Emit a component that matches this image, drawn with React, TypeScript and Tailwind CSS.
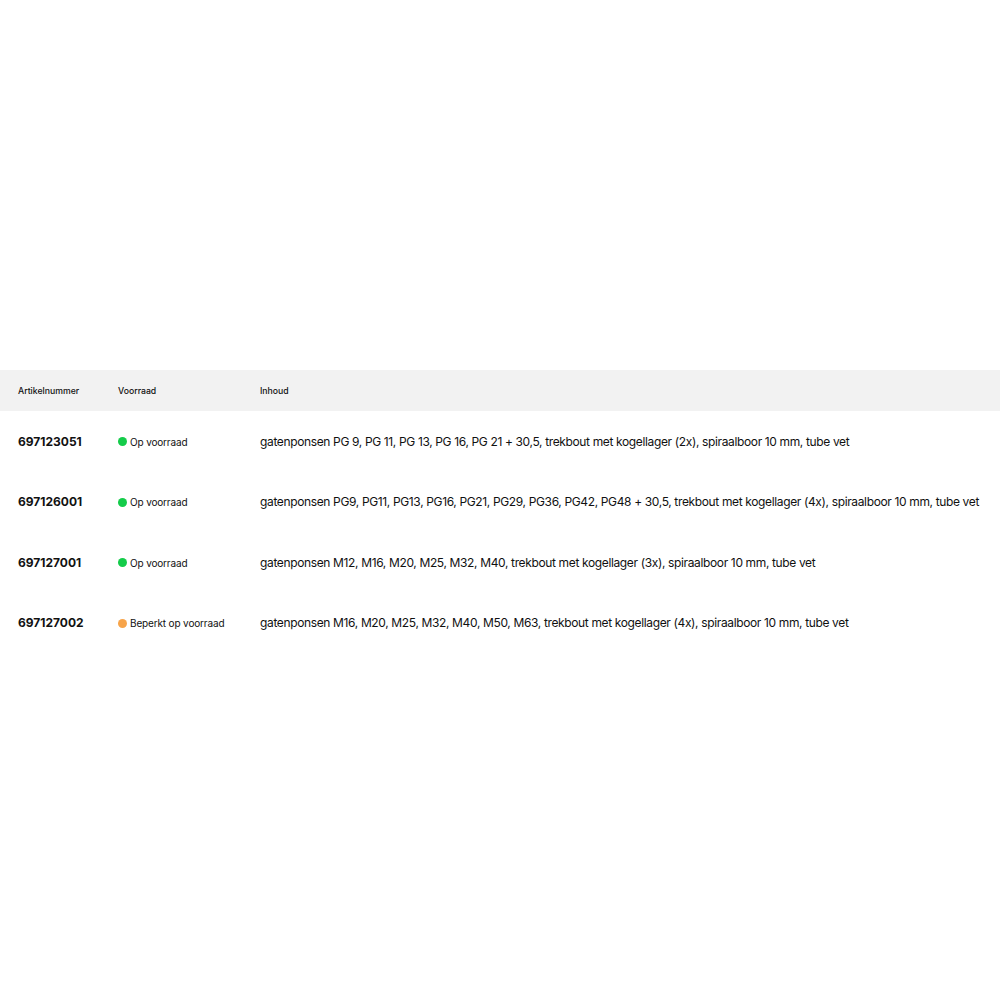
import React from "react";

const rows = [
  { nr: "697123051", status: "Op voorraad", color: "bg-[#14cc4a]", inhoud: "gatenponsen PG 9, PG 11, PG 13, PG 16, PG 21 + 30,5, trekbout met kogellager (2x), spiraalboor 10 mm, tube vet" },
  { nr: "697126001", status: "Op voorraad", color: "bg-[#14cc4a]", inhoud: "gatenponsen PG9, PG11, PG13, PG16, PG21, PG29, PG36, PG42, PG48 + 30,5, trekbout met kogellager (4x), spiraalboor 10 mm, tube vet" },
  { nr: "697127001", status: "Op voorraad", color: "bg-[#14cc4a]", inhoud: "gatenponsen M12, M16, M20, M25, M32, M40, trekbout met kogellager (3x), spiraalboor 10 mm, tube vet" },
  { nr: "697127002", status: "Beperkt op voorraad", color: "bg-[#f7a44a]", inhoud: "gatenponsen M16, M20, M25, M32, M40, M50, M63, trekbout met kogellager (4x), spiraalboor 10 mm, tube vet" },
];

export default function App() {
  return (
    <div className="w-[1000px] h-[1000px] bg-white text-[#111] font-['Inter',sans-serif] overflow-hidden">
      <div className="pt-[370px]">
        <div className="flex h-[41px] items-center pt-[3px] bg-[#f2f2f2] text-[8.7px] font-medium">
          <div className="w-[118px] shrink-0 pl-[18px]">Artikelnummer</div>
          <div className="w-[142px] shrink-0">Voorraad</div>
          <div>Inhoud</div>
        </div>
        {rows.map((r) => (
          <div key={r.nr} className="flex h-[60.5px] items-center pt-[1px] whitespace-nowrap">
            <div className="w-[118px] shrink-0 pl-[18px] text-[12px] font-bold">{r.nr}</div>
            <div className="w-[142px] shrink-0 flex items-center gap-[3px] text-[10px] tracking-[-0.15px]">
              <span className={`inline-block w-[9px] h-[9px] rounded-full ${r.color}`} />
              <span className="mt-[1px]">{r.status}</span>
            </div>
            <div className="text-[12px] tracking-[-0.36px]">{r.inhoud}</div>
          </div>
        ))}
      </div>
    </div>
  );
}
